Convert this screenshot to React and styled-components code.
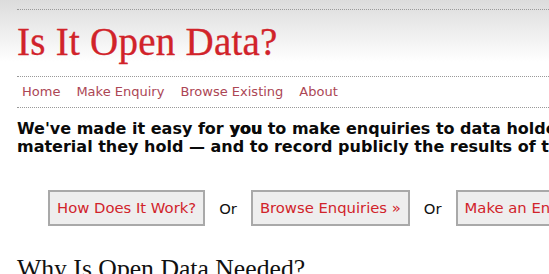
import React from "react";
import styled, { createGlobalStyle } from "styled-components";

const GlobalStyle = createGlobalStyle`
  body {
    margin: 0;
    background: linear-gradient(#dcdcdc 0px, #ffffff 62px) no-repeat #fff;
    font-family: "DejaVu Sans", Verdana, sans-serif;
    overflow: hidden;
  }
`;

const Page = styled.div`
  padding: 9px 0 0 17px;
  width: 900px;
`;

const Header = styled.header`
  border-top: 1px dotted #999;
  border-bottom: 1px dotted #999;
  padding: 9px 0 11px;
`;

const Title = styled.h1`
  margin: 0;
  font-family: "Liberation Serif", "Times New Roman", serif;
  font-weight: normal;
  font-size: 39px;
  line-height: 46px;
  letter-spacing: 0.25px;
  color: #d1232a;
  -webkit-text-stroke: 0.3px #d1232a;
`;

const Nav = styled.nav`
  display: flex;
  gap: 16px;
  padding: 6px 0 7px 5px;
  border-bottom: 1px dotted #999;
`;

const NavLink = styled.a`
  font-size: 13px;
  line-height: 17px;
  color: #ac4655;
  text-decoration: none;
`;

const Lead = styled.p`
  margin: 12px 0 0;
  font-size: 16px;
  line-height: 18px;
  font-weight: bold;
  color: #0a0a0a;
  white-space: nowrap;
  & strong {
    text-shadow: 0.6px 0 currentColor;
  }
`;

const Actions = styled.div`
  display: flex;
  align-items: center;
  gap: 14px;
  margin: 34px 0 0 31px;
`;

const ActionButton = styled.a`
  display: inline-block;
  background: #eeeeee;
  border: 2px solid #a9a9a9;
  padding: 7px 7px;
  font-size: 14.8px;
  line-height: 18px;
  color: #d1232a;
  text-decoration: none;
  white-space: nowrap;
`;

const Or = styled.span`
  font-size: 14.8px;
  color: #111;
`;

const SectionTitle = styled.h2`
  margin: 27px 0 0;
  font-family: "Liberation Serif", "Times New Roman", serif;
  font-weight: normal;
  font-size: 25.7px;
  line-height: 32px;
  color: #111;
`;

export default function App() {
  return (
    <>
      <GlobalStyle />
      <Page>
        <Header>
          <Title>Is It Open Data?</Title>
        </Header>
        <Nav>
          <NavLink href="#">Home</NavLink>
          <NavLink href="#">Make Enquiry</NavLink>
          <NavLink href="#">Browse Existing</NavLink>
          <NavLink href="#">About</NavLink>
        </Nav>
        <Lead>
          We've made it easy for <strong>you</strong> to make enquiries to data holders about the
          <br />
          material they hold — and to record publicly the results of those enquiries.
        </Lead>
        <Actions>
          <ActionButton href="#">How Does It Work?</ActionButton>
          <Or>Or</Or>
          <ActionButton href="#">Browse Enquiries »</ActionButton>
          <Or>Or</Or>
          <ActionButton href="#">Make an Enquiry »</ActionButton>
        </Actions>
        <SectionTitle>Why Is Open Data Needed?</SectionTitle>
      </Page>
    </>
  );
}
